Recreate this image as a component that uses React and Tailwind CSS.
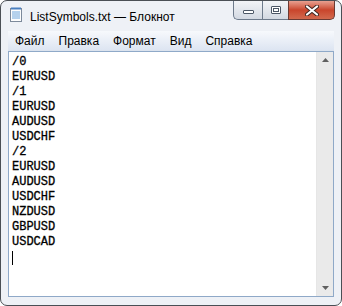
import React from 'react'

const lines = ['/0', 'EURUSD', '/1', 'EURUSD', 'AUDUSD', 'USDCHF', '/2', 'EURUSD', 'AUDUSD', 'USDCHF', 'NZDUSD', 'GBPUSD', 'USDCAD']
const menu = ['Файл', 'Правка', 'Формат', 'Вид', 'Справка']

function NotepadIcon() {
  return (
    <svg width="16" height="16" viewBox="0 0 16 16">
      <rect x="2.5" y="1.5" width="11" height="13" fill="#fdfdfd" stroke="#7d8a9b" />
      <path d="M4 5h8M4 7h8M4 9h8M4 11h8" stroke="#6ea6dc" strokeWidth="1" />
      <path d="M3 1.5h10" stroke="#4a7fc0" strokeWidth="2" />
    </svg>
  )
}

function TitleBar() {
  return (
    <div className="flex h-[30px] items-start">
      <div className="pl-[7px] pt-[6px]"><NotepadIcon /></div>
      <div className="pl-[6px] pt-[7px] text-[12px] text-black">ListSymbols.txt — Блокнот</div>
      <div className="ml-auto mr-[6px] flex h-[19px]">
        <div className="flex w-[29px] items-center justify-center rounded-bl-[5px] border border-t-0 border-r-0 border-[#6d7a8b] bg-gradient-to-b from-[#f2f4f7] to-[#d3d9e2]">
          <div className="mt-[3px] h-[4px] w-[11px] rounded-[1px] border border-[#4c5766] bg-white" />
        </div>
        <div className="flex w-[26px] items-center justify-center border border-t-0 border-r-0 border-[#6d7a8b] bg-gradient-to-b from-[#f2f4f7] to-[#d3d9e2]">
          <div className="h-[8px] w-[10px] rounded-[1px] border border-[#4c5766] bg-white p-[1px]">
            <div className="h-full w-full border border-[#4c5766]" />
          </div>
        </div>
        <div className="flex w-[47px] items-center justify-center rounded-br-[5px] border border-t-0 border-[#6a3a33] bg-gradient-to-b from-[#e7a090] via-[#c9452c] to-[#d2694d]">
          <svg width="14" height="11" viewBox="0 0 14 11">
            <path d="M2 1.5L12 9.5M12 1.5L2 9.5" stroke="#3d2620" strokeWidth="4" strokeLinecap="round" />
            <path d="M2 1.5L12 9.5M12 1.5L2 9.5" stroke="#ffffff" strokeWidth="2.2" strokeLinecap="round" />
          </svg>
        </div>
      </div>
    </div>
  )
}

export default function App() {
  return (
    <div className="h-[306px] w-[342px] bg-white" style={{ fontFamily: '"Liberation Sans", sans-serif' }}>
      <div className="flex h-full flex-col rounded-[7px] border border-[#4a4f55] bg-[#eef1f6]">
        <TitleBar />
        <div className="mx-[7px] flex h-[20px] items-center gap-[14px] border-b border-[#dbe3ee] bg-gradient-to-b from-[#f7f9fc] to-[#dde5f2] pl-[7px] text-[12px] text-black">
          {menu.map((m) => (
            <span key={m}>{m}</span>
          ))}
        </div>
        <div className="mx-[7px] mb-[8px] flex flex-1 border border-[#8fa9c8] bg-white">
          <div className="flex-1 pl-[3px] pt-[3px] text-[12px] leading-[15px] text-black [-webkit-text-stroke:0.3px_#000]" style={{ fontFamily: '"Liberation Mono", monospace' }}>
            {lines.map((l, i) => (
              <div key={i}>{l}</div>
            ))}
            <div className="mt-[1px] h-[14px] w-[1px] bg-black" />
          </div>
          <div className="flex w-[17px] flex-col items-center justify-between border-l border-[#e6e6e6] bg-[#eaeaea] py-[6px]">
            <svg width="7" height="4" viewBox="0 0 7 4"><path d="M3.5 0L7 4H0z" fill="#606060" /></svg>
            <svg width="7" height="4" viewBox="0 0 7 4"><path d="M0 0h7L3.5 4z" fill="#606060" /></svg>
          </div>
        </div>
      </div>
    </div>
  )
}
